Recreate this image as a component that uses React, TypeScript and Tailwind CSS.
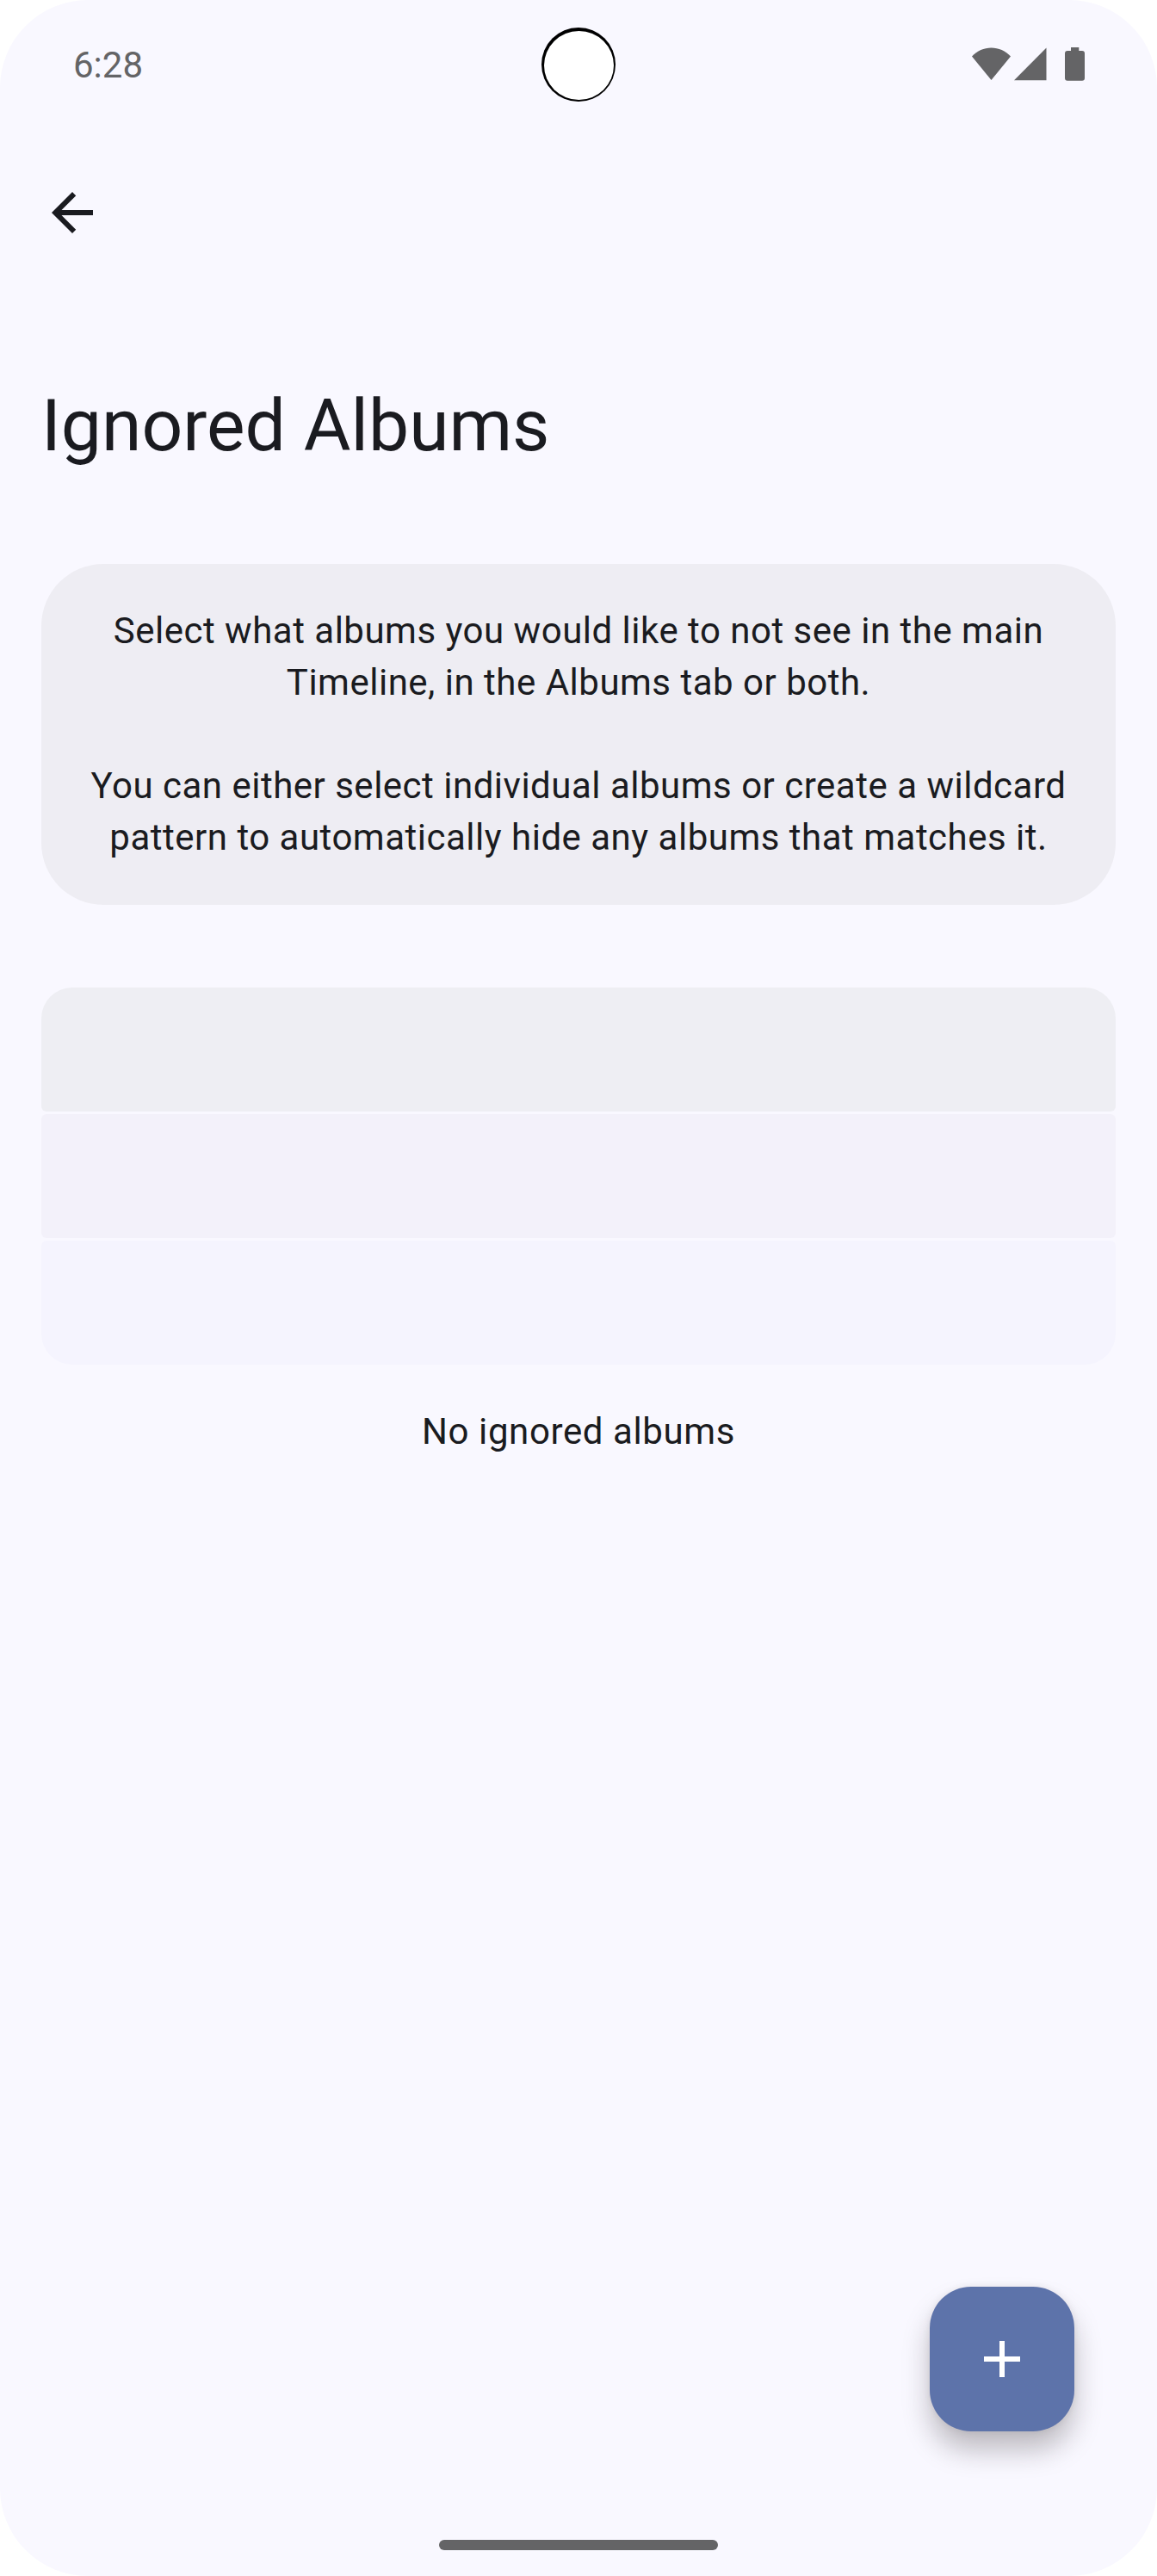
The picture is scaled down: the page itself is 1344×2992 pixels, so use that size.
const skeletonRows = [
  'h-36 rounded-t-[36px] rounded-b-[6px] bg-[#eeeef3]',
  'h-36 rounded-[6px] bg-[#f3f1fa]',
  'h-36 rounded-t-[6px] rounded-b-[36px] bg-[#f5f4fe]',
];

function StatusBar() {
  return (
    <header className="relative flex h-[156px] items-start justify-between pr-[83px] pl-[85px] text-[#646466]">
      <span className="mt-[52px] text-[42px] leading-[48px]">6:28</span>
      {/* Camera cutout */}
      <svg className="absolute top-8 left-[629px] size-[86px]" viewBox="0 0 86 86">
        <circle cx="43" cy="43" r="43" fill="#000" />
        <ellipse cx="43.5" cy="44" rx="40.5" ry="40" fill="#fff" />
      </svg>
      {/* Wi-Fi, signal and battery */}
      <svg className="mt-[55px] h-[39px] w-[132px]" viewBox="0 0 132 39" fill="currentColor">
        <path d="M0 10.5C6 4 14 .5 22.500 .5S39 4 45 10.500L22.500 38Z" />
        <path d="M49 38.300L86.500 .5V38.300Z" />
        <path d="M115 0h9.300v4h3.700a3 3 0 0 1 3 3v28.700a3 3 0 0 1-3 3h-17a3 3 0 0 1-3-3V7a3 3 0 0 1 3-3h4Z" />
      </svg>
    </header>
  );
}

export default function App() {
  return (
    <div className="h-[2992px] w-[1344px] bg-white">
      <main className="flex h-full flex-col rounded-[102px] bg-[#f9f8ff] font-['Roboto',sans-serif] text-[#1a1b20]">
        <StatusBar />
        <nav className="flex h-[192px] items-start px-12 pt-[55px]">
          <button aria-label="Back">
            <svg className="size-[72px]" viewBox="0 0 24 24" fill="currentColor">
              <path d="M20 11H7.830l5.590-5.590L12 4l-8 8 8 8 1.410-1.410L7.830 13H20v-2z" />
            </svg>
          </button>
        </nav>
        <h1 className="mt-[87px] px-12 text-[84px] leading-[120px]">Ignored Albums</h1>
        <section className="mx-12 mt-[100px] flex h-[396px] flex-col gap-[60px] rounded-[72px] bg-[#eeedf3] pt-12 text-center text-[42px] leading-[60px] tracking-[0.5px]">
          <p>
            Select what albums you would like to not see in the main
            <br />
            Timeline, in the Albums tab or both.
          </p>
          <p>
            You can either select individual albums or create a wildcard
            <br />
            pattern to automatically hide any albums that matches it.
          </p>
        </section>
        <section className="mx-12 mt-24 flex flex-col gap-[3px]">
          {skeletonRows.map((row) => (
            <div key={row} className={row} />
          ))}
        </section>
        <p className="mt-12 text-center text-[42px] leading-[60px] tracking-[0.6px]">No ignored albums</p>
        <div className="grow" />
        <button
          aria-label="Add"
          className="mr-24 mb-[126px] grid size-[168px] place-items-center self-end rounded-[48px] bg-[#5d73aa] text-white shadow-[0_22px_32px_-1px_rgba(25,18,22,0.27),0_0_9px_rgba(40,20,30,0.08)]"
        >
          <svg className="size-[72px]" viewBox="0 0 24 24" fill="currentColor">
            <path d="M19 13h-6v6h-2v-6H5v-2h6V5h2v6h6v2z" />
          </svg>
        </button>
        <div className="mb-[30px] h-3 w-[324px] self-center rounded-full bg-[#646466]" />
      </main>
    </div>
  );
}
